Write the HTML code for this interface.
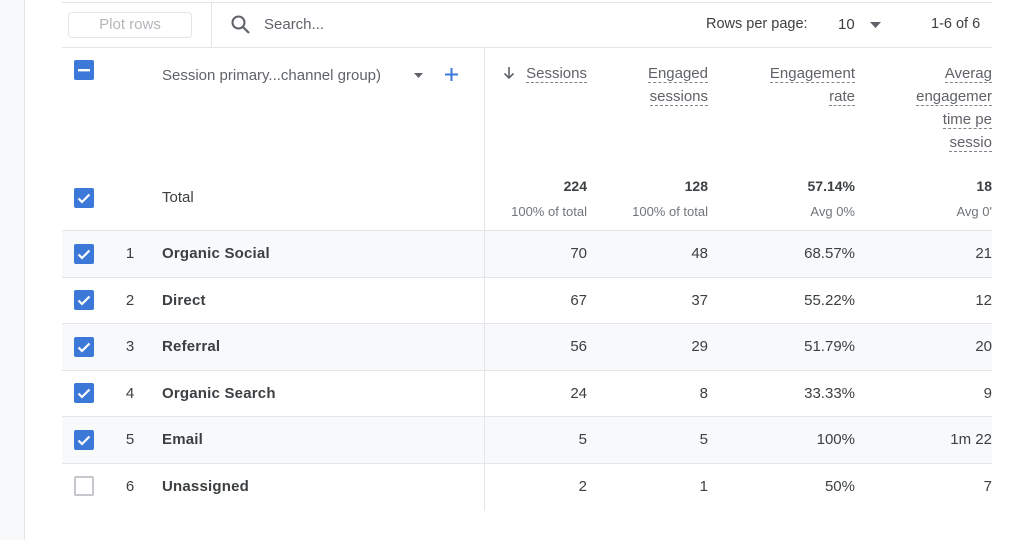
<!DOCTYPE html>
<html><head><meta charset="utf-8"><style>
*{margin:0;padding:0;box-sizing:border-box}
body{width:1024px;height:540px;background:#fff;font-family:"Liberation Sans",Arial,sans-serif;position:relative;overflow:hidden;color:#202124}
.side{position:absolute;left:0;top:0;width:25px;height:540px;background:#f8f9fa;border-right:1px solid #e3e5e8}
.a{position:absolute}
.hl{position:absolute;height:1px;background:#e3e5e8}
.vl{position:absolute;width:1px;background:#e3e5e8}
.cb{position:absolute;left:74px;width:20px;height:20px;border-radius:2px;background:#3c78d8}
.cb svg{position:absolute;left:0;top:0}
.cbe{background:#fff;border:2px solid #c4c7cb}
.rowbg{position:absolute;left:62px;width:930px;height:46px;background:#f8f9fa}
.num{position:absolute;left:124px;width:12px;text-align:center;font-size:15px;color:#3c4043}
.name{position:absolute;left:162px;font-size:15px;font-weight:bold;color:#3c4043;letter-spacing:0.2px}
.v{position:absolute;font-size:15px;color:#3c4043;text-align:right}
.h{position:absolute;font-size:15px;color:#5f6368;text-align:right;line-height:23px}
.h span{border-bottom:1px dashed #80868b}
</style></head><body>
<div class="side"></div>
<div class="hl" style="left:62px;top:2px;width:930px"></div>
<div class="hl" style="left:62px;top:47px;width:930px"></div>
<div class="vl" style="left:211px;top:2px;height:45px"></div>
<div class="vl" style="left:484px;top:47px;height:463px"></div>
<div class="a" style="left:68px;top:12px;width:124px;height:26px;border:1px solid #e3e5e8;border-radius:4px;text-align:center;line-height:24px;font-size:15px;color:#b4b7bb">Plot rows</div>
<svg class="a" style="left:230px;top:14px" width="22" height="22" viewBox="0 0 22 22"><circle cx="8.5" cy="8.5" r="6" fill="none" stroke="#5f6368" stroke-width="2"/><path d="M13 13l6 6" stroke="#5f6368" stroke-width="2.2"/></svg>
<div class="a" style="left:264px;top:16px;font-size:15px;color:#5f6368">Search...</div>
<div class="a" style="left:706px;top:16px;font-size:14.5px;color:#3c4043">Rows per page:</div>
<div class="a" style="left:838px;top:16px;font-size:15px;color:#3c4043">10</div>
<svg class="a" style="left:870px;top:22px" width="11" height="6"><path d="M0 0h11L5.5 6z" fill="#5f6368"/></svg>
<div class="a" style="left:931px;top:16px;font-size:14.5px;color:#3c4043">1-6 of 6</div>

<div class="cb" style="top:60px"><svg width="20" height="20"><rect x="4" y="9" width="12" height="2.4" fill="#fff"/></svg></div>
<div class="a" style="left:162px;top:67px;font-size:15px;color:#5f6368">Session primary...channel group)</div>
<svg class="a" style="left:414px;top:73px" width="9" height="5"><path d="M0 0h9L4.5 5z" fill="#5f6368"/></svg>
<svg class="a" style="left:444px;top:67px" width="15" height="15"><path d="M7.5 1v13M1 7.5h13" stroke="#3c78d8" stroke-width="2"/></svg>

<svg class="a" style="left:503px;top:66px" width="12" height="14"><path d="M6 1v11M1.5 7.5L6 12l4.5-4.5" stroke="#5f6368" stroke-width="1.6" fill="none"/></svg>
<div class="h" style="right:437px;top:62px"><span>Sessions</span></div>
<div class="h" style="right:316px;top:62px"><span>Engaged</span><br><span>sessions</span></div>
<div class="h" style="right:169px;top:62px"><span>Engagement</span><br><span>rate</span></div>
<div class="h" style="right:32px;top:62px;white-space:nowrap"><span>Averag</span><br><span>engagemer</span><br><span>time pe</span><br><span>sessio</span></div>
<div class="a" style="left:992px;top:48px;width:32px;height:470px;background:#fff"></div>

<div class="cb" style="top:188px"><svg width="20" height="20"><path d="M4.5 10.5l3.5 3.5 7.5-7.5" stroke="#fff" stroke-width="2.2" fill="none"/></svg></div>
<div class="a" style="left:162px;top:189px;font-size:15px;color:#3c4043">Total</div>
<div class="v" style="right:437px;top:178px;font-weight:bold;font-size:14px">224</div>
<div class="v" style="right:316px;top:178px;font-weight:bold;font-size:14px">128</div>
<div class="v" style="right:169px;top:178px;font-weight:bold;font-size:14px">57.14%</div>
<div class="v" style="right:32px;top:178px;font-weight:bold;font-size:14px">18</div>
<div class="v" style="right:437px;top:204px;font-size:13px;color:#70757a">100% of total</div>
<div class="v" style="right:316px;top:204px;font-size:13px;color:#70757a">100% of total</div>
<div class="v" style="right:169px;top:204px;font-size:13px;color:#70757a">Avg 0%</div>
<div class="v" style="right:32px;top:204px;font-size:13px;color:#70757a">Avg 0'</div>

<div class="rowbg" style="top:231px"></div>
<div class="rowbg" style="top:324px"></div>
<div class="rowbg" style="top:417px"></div>
<div class="vl" style="left:484px;top:231px;height:280px"></div>
<div class="hl" style="left:62px;top:230px;width:930px"></div>
<div class="hl" style="left:62px;top:277px;width:930px"></div>
<div class="hl" style="left:62px;top:323px;width:930px"></div>
<div class="hl" style="left:62px;top:370px;width:930px"></div>
<div class="hl" style="left:62px;top:416px;width:930px"></div>
<div class="hl" style="left:62px;top:463px;width:930px"></div>

<!-- rows -->
<div class="cb" style="top:244px"><svg width="20" height="20"><path d="M4.5 10.5l3.5 3.5 7.5-7.5" stroke="#fff" stroke-width="2.2" fill="none"/></svg></div>
<div class="num" style="top:245px">1</div><div class="name" style="top:245px">Organic Social</div>
<div class="v" style="right:437px;top:245px">70</div><div class="v" style="right:316px;top:245px">48</div><div class="v" style="right:169px;top:245px">68.57%</div><div class="v" style="right:32px;top:245px">21</div>

<div class="cb" style="top:290px"><svg width="20" height="20"><path d="M4.5 10.5l3.5 3.5 7.5-7.5" stroke="#fff" stroke-width="2.2" fill="none"/></svg></div>
<div class="num" style="top:292px">2</div><div class="name" style="top:292px">Direct</div>
<div class="v" style="right:437px;top:292px">67</div><div class="v" style="right:316px;top:292px">37</div><div class="v" style="right:169px;top:292px">55.22%</div><div class="v" style="right:32px;top:292px">12</div>

<div class="cb" style="top:337px"><svg width="20" height="20"><path d="M4.5 10.5l3.5 3.5 7.5-7.5" stroke="#fff" stroke-width="2.2" fill="none"/></svg></div>
<div class="num" style="top:338px">3</div><div class="name" style="top:338px">Referral</div>
<div class="v" style="right:437px;top:338px">56</div><div class="v" style="right:316px;top:338px">29</div><div class="v" style="right:169px;top:338px">51.79%</div><div class="v" style="right:32px;top:338px">20</div>

<div class="cb" style="top:383px"><svg width="20" height="20"><path d="M4.5 10.5l3.5 3.5 7.5-7.5" stroke="#fff" stroke-width="2.2" fill="none"/></svg></div>
<div class="num" style="top:385px">4</div><div class="name" style="top:385px">Organic Search</div>
<div class="v" style="right:437px;top:385px">24</div><div class="v" style="right:316px;top:385px">8</div><div class="v" style="right:169px;top:385px">33.33%</div><div class="v" style="right:32px;top:385px">9</div>

<div class="cb" style="top:430px"><svg width="20" height="20"><path d="M4.5 10.5l3.5 3.5 7.5-7.5" stroke="#fff" stroke-width="2.2" fill="none"/></svg></div>
<div class="num" style="top:431px">5</div><div class="name" style="top:431px">Email</div>
<div class="v" style="right:437px;top:431px">5</div><div class="v" style="right:316px;top:431px">5</div><div class="v" style="right:169px;top:431px">100%</div><div class="v" style="right:32px;top:431px">1m 22</div>

<div class="cb cbe" style="top:476px"></div>
<div class="num" style="top:478px">6</div><div class="name" style="top:478px">Unassigned</div>
<div class="v" style="right:437px;top:478px">2</div><div class="v" style="right:316px;top:478px">1</div><div class="v" style="right:169px;top:478px">50%</div><div class="v" style="right:32px;top:478px">7</div>
</body></html>
